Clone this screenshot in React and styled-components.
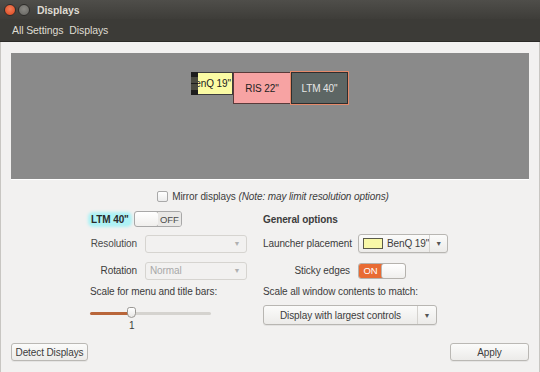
import React from 'react';
import styled, { createGlobalStyle } from 'styled-components';

const Global = createGlobalStyle`
  html, body { margin: 0; padding: 0; }
  body {
    font-family: "Liberation Sans", Arial, sans-serif;
    font-size: 10px;
    letter-spacing: -0.1px;
    color: #3c3c3c;
  }
  * { white-space: nowrap; }
`;

const Window = styled.div`
  width: 540px;
  height: 372px;
  background: #f2f1f0;
  display: flex;
  flex-direction: column;
  overflow: hidden;
`;

const TitleBar = styled.div`
  height: 19px;
  background: linear-gradient(#4f4e4a, #3e3d39);
  display: flex;
  align-items: center;
  padding-left: 4px;
  gap: 2px;
`;

const WinButton = styled.span`
  width: 10px;
  height: 10px;
  border-radius: 50%;
  background: ${p => p.$close ? 'radial-gradient(circle at 50% 40%, #f4805a, #d8441c)' : 'radial-gradient(circle at 50% 40%, #8a8984, #65645f)'};
  border: 1px solid #2e2d2a;
`;

const Title = styled.span`
  margin-left: 5px;
  color: #dfdbd2;
  font-weight: bold;
  font-size: 10.5px;
`;

const MenuBar = styled.div`
  height: 22px;
  background: #3c3b37;
  display: flex;
  align-items: center;
  padding-left: 12px;
  gap: 6px;
  color: #dfdbd2;
  font-size: 10.5px;
  border-bottom: 1px solid #2b2a27;
`;

const Body = styled.div`
  flex: 1;
  display: flex;
  flex-direction: column;
  padding: 11px 10px 0 10px;
  border-left: 1px solid #c8c6c2;
  border-right: 1px solid #c8c6c2;
`;

const Canvas = styled.div`
  position: relative;
  height: 126px;
  background: #8a8a8a;
  box-shadow: 0 1px 0 #ffffff;
  overflow: hidden;
`;

const Monitor = styled.div`
  position: absolute;
  box-sizing: border-box;
  display: flex;
  align-items: center;
  justify-content: ${p => p.$end ? 'flex-end' : 'center'};
  padding-right: ${p => p.$end ? 1 : 0}px;
  overflow: hidden;
  font-size: 10px;
  border: 1px solid ${p => p.$border || '#3d3d3d'};
  background: ${p => p.$bg};
  color: ${p => p.$fg || '#222'};
`;

const Launcher = styled.div`
  position: absolute;
  display: flex;
  flex-direction: column;
  background: #1d1d1d;
  gap: 1px;
  padding-top: 5px;
  box-sizing: border-box;
`;

const LauncherTile = styled.span`
  height: 6px;
  background: #4a4a40;
`;

const MirrorRow = styled.label`
  display: flex;
  align-items: center;
  justify-content: center;
  gap: 4px;
  height: 20px;
  margin-top: 7px;
  padding-left: 6px;
  color: #3c3c3c;
`;

const Checkbox = styled.span`
  width: 11px;
  height: 11px;
  box-sizing: border-box;
  border: 1px solid #a9a9a9;
  border-radius: 2px;
  background: linear-gradient(#ffffff, #ececec);
`;

const Note = styled.i``;

const Columns = styled.div`
  display: flex;
  padding-left: 79px;
  gap: 13px;
  margin-top: 2px;
`;

const Column = styled.div`
  display: flex;
  flex-direction: column;
  width: ${p => p.$w}px;
`;

const Row = styled.div`
  display: flex;
  align-items: ${p => p.$top ? 'flex-start' : 'center'};
  padding-top: ${p => p.$top ? 5 : 0}px;
  box-sizing: border-box;
  height: ${p => p.$h || 27}px;
`;

const Label = styled.span`
  width: ${p => p.$w}px;
  text-align: ${p => p.$left ? 'left' : 'right'};
  padding-right: 8px;
  box-sizing: border-box;
  color: ${p => p.$dim ? '#4a4a4a' : '#3c3c3c'};
`;

const MonitorName = styled.span`
  font-weight: bold;
  color: #2a2a2a;
  background: #aef2f5;
  box-shadow: 0 0 3px 2px #aef2f5;
  border-radius: 3px;
  padding: 0 1px;
  margin-right: 4px;
`;

const Heading = styled.span`
  font-weight: bold;
  color: #3c3c3c;
`;

const Switch = styled.span`
  display: inline-flex;
  width: 46px;
  height: 14px;
  border: 1px solid ${p => p.$on ? '#b5b2ad' : '#a8a8a8'};
  border-radius: 3px;
  overflow: hidden;
  font-size: 9.5px;
`;

const SwitchText = styled.span`
  flex: 1;
  display: flex;
  align-items: center;
  justify-content: center;
  background: ${p => p.$on ? '#e86b33' : '#e9e8e6'};
  color: ${p => p.$on ? '#ffffff' : '#4a4a4a'};
`;

const Knob = styled.span`
  width: 23px;
  background: linear-gradient(#ffffff, #f0efed);
  border-radius: 3px;
  box-shadow: 0 0 0 1px #b9b7b3;
`;

const Combo = styled.span`
  display: flex;
  align-items: center;
  box-sizing: border-box;
  width: ${p => p.$w}px;
  height: ${p => p.$h || 18}px;
  border: 1px solid ${p => p.$disabled ? '#d6d4d0' : '#b8b6b2'};
  border-radius: 3px;
  background: ${p => p.$disabled ? '#f2f1f0' : 'linear-gradient(#fbfbfa, #ecebe9)'};
  color: ${p => p.$disabled ? '#a8a8a8' : '#3c3c3c'};
  box-shadow: ${p => p.$disabled ? 'none' : '0 1px 0 rgba(0,0,0,0.06)'};
`;

const ComboText = styled.span`
  flex: 1;
  display: flex;
  align-items: center;
  justify-content: ${p => p.$center ? 'center' : 'flex-start'};
  padding-left: ${p => p.$center ? 0 : 4}px;
  gap: 4px;
`;

const Arrow = styled.span`
  width: 18px;
  height: 100%;
  display: flex;
  align-items: center;
  justify-content: center;
  font-size: 7px;
  color: ${p => p.$disabled ? '#b0b0b0' : '#555'};
  border-left: ${p => p.$sep ? '1px solid #d4d2ce' : 'none'};
`;

const Swatch = styled.span`
  width: 18px;
  height: 9px;
  background: #f8f8a8;
  border: 1px solid #5a5a4a;
`;

const SliderWrap = styled.div`
  position: relative;
  width: 121px;
  height: 30px;
`;

const Track = styled.div`
  position: absolute;
  top: 10px;
  left: 0;
  width: 100%;
  height: 3px;
  border-radius: 2px;
  background: linear-gradient(to right, #b9663a 0 42px, #d5d3cf 42px);
`;

const Thumb = styled.span`
  position: absolute;
  top: 5px;
  left: 37px;
  width: 9px;
  height: 11px;
  box-sizing: border-box;
  border: 1px solid #9a9894;
  border-radius: 3px 3px 5px 5px;
  background: linear-gradient(#ffffff, #e8e7e5);
`;

const Tick = styled.span`
  position: absolute;
  top: 18px;
  left: 39px;
  font-size: 10px;
  color: #3c3c3c;
`;

const Footer = styled.div`
  margin-top: auto;
  display: flex;
  justify-content: space-between;
  align-items: center;
  padding: 0 0 11px 0;
`;

const Button = styled.button`
  font-family: inherit;
  font-size: 10px;
  letter-spacing: -0.1px;
  color: #3c3c3c;
  height: 18px;
  width: ${p => p.$w}px;
  padding: 0;
  border: 1px solid #bab8b4;
  border-radius: 3px;
  background: linear-gradient(#fbfbfa, #ecebe9);
  box-shadow: 0 1px 0 rgba(0,0,0,0.05);
`;

export default function App() {
  return (
    <Window>
      <Global />
      <TitleBar>
        <WinButton $close />
        <WinButton />
        <Title>Displays</Title>
      </TitleBar>
      <MenuBar>
        <span>All Settings</span>
        <span>Displays</span>
      </MenuBar>
      <Body>
        <Canvas>
          <Monitor $end $bg="#fbfba4" style={{ left: 180, top: 19, width: 42, height: 23 }}>BenQ 19"</Monitor>
          <Launcher style={{ left: 180, top: 19, width: 7, height: 23 }}>
            <LauncherTile />
            <LauncherTile />
          </Launcher>
          <Monitor $bg="#f7a3a3" $border="#5a3a3a" style={{ left: 222, top: 19, width: 58, height: 32 }}>RIS 22"</Monitor>
          <Monitor $bg="#5d6664" $fg="#e6e6e6" $border="#2e2e2e" style={{ left: 280, top: 19, width: 57, height: 32, boxShadow: '0 0 0 1px #e58a6a' }}>LTM 40"</Monitor>
        </Canvas>
        <MirrorRow>
          <Checkbox />
          <span>Mirror displays <Note>(Note: may limit resolution options)</Note></span>
        </MirrorRow>
        <Columns>
          <Column $w={160}>
            <Row $h={22}>
              <MonitorName>LTM 40"</MonitorName>
              <Switch>
                <Knob />
                <SwitchText>OFF</SwitchText>
              </Switch>
            </Row>
            <Row>
              <Label $w={55} $dim>Resolution</Label>
              <Combo $w={102} $disabled>
                <ComboText />
                <Arrow $disabled>▼</Arrow>
              </Combo>
            </Row>
            <Row>
              <Label $w={55}>Rotation</Label>
              <Combo $w={102} $disabled>
                <ComboText>Normal</ComboText>
                <Arrow $disabled>▼</Arrow>
              </Combo>
            </Row>
            <Row $h={14}>
              <span>Scale for menu and title bars:</span>
            </Row>
            <Row $h={38}>
              <SliderWrap>
                <Track />
                <Thumb />
                <Tick>1</Tick>
              </SliderWrap>
            </Row>
          </Column>
          <Column $w={190}>
            <Row $h={22}>
              <Heading>General options</Heading>
            </Row>
            <Row>
              <Label $w={95} $left>Launcher placement</Label>
              <Combo $w={90} $h={19}>
                <ComboText><Swatch />BenQ 19"</ComboText>
                <Arrow $sep>▼</Arrow>
              </Combo>
            </Row>
            <Row>
              <Label $w={95}>Sticky edges</Label>
              <Switch $on>
                <SwitchText $on>ON</SwitchText>
                <Knob />
              </Switch>
            </Row>
            <Row $h={14}>
              <span>Scale all window contents to match:</span>
            </Row>
            <Row $h={38} $top>
              <Combo $w={174} $h={20} style={{ marginTop: 2 }}>
                <ComboText $center>Display with largest controls</ComboText>
                <Arrow $sep>▼</Arrow>
              </Combo>
            </Row>
          </Column>
        </Columns>
        <Footer>
          <Button $w={77}>Detect Displays</Button>
          <Button $w={79}>Apply</Button>
        </Footer>
      </Body>
    </Window>
  );
}
